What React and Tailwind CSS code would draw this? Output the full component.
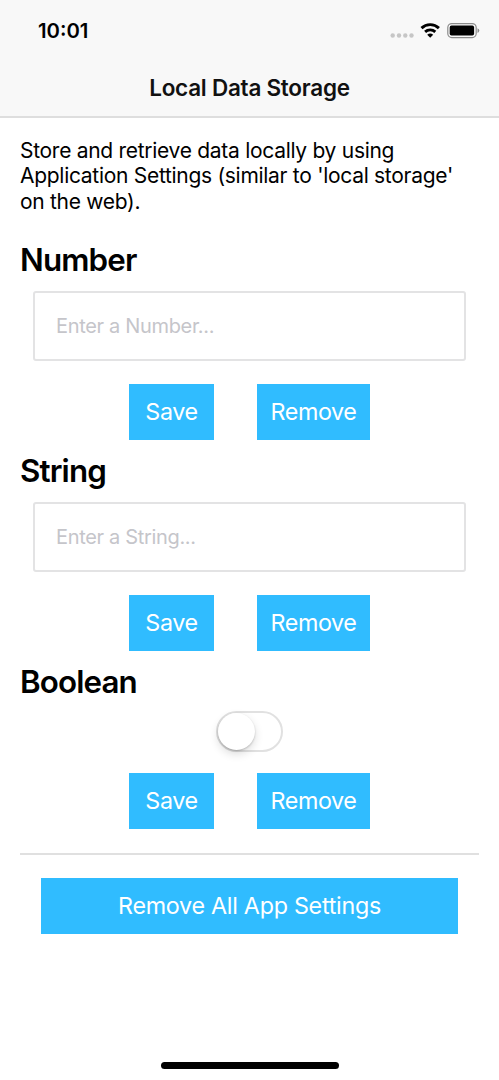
import React, { useState } from "react";

function StatusIcons() {
  return (
    <svg width="92" height="20" viewBox="0 0 92 20" className="block">
      <g fill="#c6c6c6">
        <circle cx="2.7" cy="15.5" r="2.2" />
        <circle cx="9" cy="15.5" r="2.2" />
        <circle cx="15.3" cy="15.5" r="2.2" />
        <circle cx="21.5" cy="15.5" r="2.2" />
      </g>
      <g fill="none" stroke="#000" strokeWidth="2.9">
        <path d="M31.5 8.1A12.6 12.6 0 0 1 48.9 8.1" />
        <path d="M35.1 11.8A7.6 7.6 0 0 1 45.3 11.8" />
      </g>
      <path d="M40.2 17.8L37.2 14.8A4.4 4.4 0 0 1 43.2 14.8Z" fill="#000" />
      <rect x="57.8" y="3.6" width="28.4" height="14" rx="4" fill="none" stroke="#8b8b8b" strokeWidth="1.2" />
      <rect x="59.7" y="5.6" width="24.4" height="10" rx="1.8" fill="#000" />
      <path d="M87.5 8.2Q89.3 9 89.3 10.6Q89.3 12.2 87.5 13Z" fill="#8b8b8b" />
    </svg>
  );
}

function Actions() {
  return (
    <div className="flex h-14 justify-center gap-[43px] text-[23.3px] leading-[56px] text-white">
      <button className="h-14 w-[85px] bg-[#30bcff] tracking-[-0.4px]">Save</button>
      <button className="h-14 w-[113px] bg-[#30bcff] tracking-[-0.4px]">Remove</button>
    </div>
  );
}

function Heading({ children }) {
  return <h2 className="h-10 text-[31.3px] leading-[40px] font-semibold tracking-[-0.85px]">{children}</h2>;
}

function TextSection({ title, placeholder }) {
  return (
    <section className="h-[211px]">
      <Heading>{title}</Heading>
      <div className="mx-[13px] mt-[11px]">
        <input
          aria-label={title}
          placeholder={placeholder}
          className="block h-[70px] w-full rounded-[3px] border-2 border-[#e3e3e4] bg-white px-[21px] text-[20px] tracking-[-0.33px] outline-none placeholder:text-[#c5c5ca]"
        />
      </div>
      <div className="mt-[23px]">
        <Actions />
      </div>
    </section>
  );
}

export default function App() {
  const [on, setOn] = useState(false);
  return (
    <div className="flex h-[1080px] w-[499px] flex-col overflow-hidden bg-white font-['Inter','Liberation_Sans',sans-serif] text-black">
      <header className="h-[118px] border-b-2 border-[#dedede] bg-[#f8f8f8]">
        <div className="flex h-[60px] items-center justify-between pr-[21px] pl-[38px]">
          <span className="pt-0.5 text-[20.3px] font-semibold">10:01</span>
          <div className="mr-[-4px]">
            <StatusIcons />
          </div>
        </div>
        <h1 className="pt-[13px] text-center text-[22.5px] leading-[30px] font-semibold tracking-[-0.25px] text-[#111]">Local Data Storage</h1>
      </header>
      <main className="flex-1 px-5 pt-[20px]">
        <p className="h-[102px] text-[21px] leading-[25.3px] tracking-[-0.29px] whitespace-nowrap">
          Store and retrieve data locally by using
          <br />
          Application Settings (similar to 'local storage'
          <br />
          on the web).
        </p>
        <TextSection title="Number" placeholder="Enter a Number..." />
        <TextSection title="String" placeholder="Enter a String..." />
        <section>
          <Heading>Boolean</Heading>
          <div className="mt-[9px] flex h-[62px] justify-center">
            <button
              role="switch"
              aria-label="Boolean"
              aria-checked={on}
              onClick={() => setOn(!on)}
              className="flex h-[41px] w-[67px] items-center rounded-full border-2 border-[#e1e1e1] bg-white aria-checked:justify-end aria-checked:bg-[#4cd964]"
            >
              <span className="h-[37px] w-[37px] rounded-full bg-white shadow-[0_4px_10px_rgba(0,0,0,0.14),0_1px_2px_rgba(0,0,0,0.2)]" />
            </button>
          </div>
          <Actions />
        </section>
        <hr className="mt-6 border-t-2 border-[#e0e0e0]" />
        <button className="mt-[23px] ml-[21px] block h-14 w-[417px] bg-[#30bcff] text-[23.3px] leading-[56px] tracking-[-0.27px] text-white">
          Remove All App Settings
        </button>
      </main>
      <footer className="flex justify-center pb-[11px]">
        <div className="h-[7px] w-[178px] rounded-full bg-black" />
      </footer>
    </div>
  );
}
